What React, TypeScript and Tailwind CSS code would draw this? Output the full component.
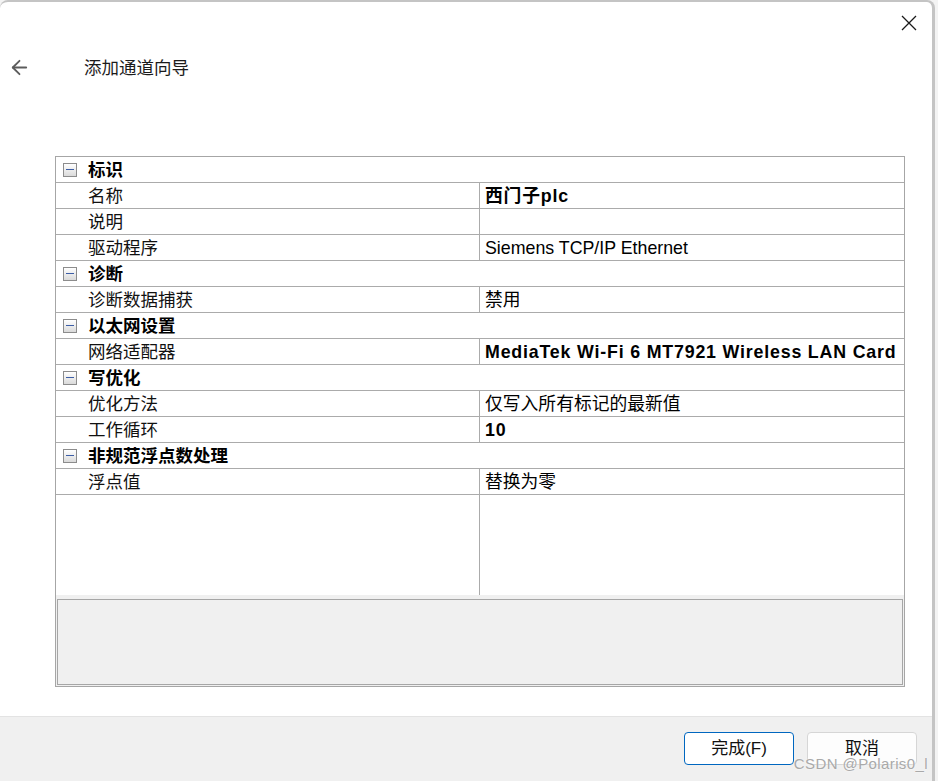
import React from "react";
import { ArrowLeft } from "lucide-react";

type Row =
  | { kind: "cat"; label: string }
  | { kind: "prop"; label: string; value: string; bold?: boolean };

const rows: Row[] = [
  { kind: "cat", label: "标识" },
  { kind: "prop", label: "名称", value: "西门子plc", bold: true },
  { kind: "prop", label: "说明", value: "" },
  { kind: "prop", label: "驱动程序", value: "Siemens TCP/IP Ethernet" },
  { kind: "cat", label: "诊断" },
  { kind: "prop", label: "诊断数据捕获", value: "禁用" },
  { kind: "cat", label: "以太网设置" },
  { kind: "prop", label: "网络适配器", value: "MediaTek Wi-Fi 6 MT7921 Wireless LAN Card", bold: true },
  { kind: "cat", label: "写优化" },
  { kind: "prop", label: "优化方法", value: "仅写入所有标记的最新值" },
  { kind: "prop", label: "工作循环", value: "10", bold: true },
  { kind: "cat", label: "非规范浮点数处理" },
  { kind: "prop", label: "浮点值", value: "替换为零" },
];

const font = { fontFamily: '"Liberation Sans", "Noto Sans CJK SC", sans-serif' };

const MinusBox = () => (
  <div className="w-[14px] h-[14px] border border-[#8c8c8c] bg-gradient-to-b from-white to-[#dadada] flex items-center justify-center">
    <div className="w-[8px] h-[1.5px] bg-[#3d5ea6]" />
  </div>
);

const GridRow = ({ row }: { row: Row }) => {
  if (row.kind === "cat") {
    return (
      <div className="h-[26px] border-b border-[#ababab] flex items-center">
        <div className="w-[32px] pl-[7px] flex items-center">
          <MinusBox />
        </div>
        <span className="pt-[2px] text-[17.5px] font-bold text-black leading-none">{row.label}</span>
      </div>
    );
  }
  return (
    <div className="h-[26px] border-b border-[#ababab] flex">
      <div className="w-[424px] pl-[32px] pt-[2px] flex items-center border-r border-[#ababab] text-[17.5px] text-[#111] leading-none">
        {row.label}
      </div>
      <div
        className={
          row.bold
            ? "flex-1 pl-[5px] pt-[2px] flex items-center text-[17.8px] font-bold tracking-[0.82px] text-black leading-none whitespace-nowrap overflow-hidden"
            : "flex-1 pl-[5px] pt-[2px] flex items-center text-[17.8px] text-black leading-none whitespace-nowrap overflow-hidden"
        }
      >
        {row.value}
      </div>
    </div>
  );
};

export default function App() {
  return (
    <div className="w-[938px] h-[781px] bg-[#f3f3f3] relative overflow-hidden" style={font}>
      <div className="w-[935px] h-[790px] bg-white rounded-t-[8px] border-t-2 border-r-[3px] border-[#c4c4c4] flex flex-col">
        {/* title area */}
        <div className="h-[154px] flex flex-col">
          <div className="flex justify-end pt-[13px] pr-[15px]">
            <svg width="16" height="16" viewBox="0 0 16 16" className="text-[#1a1a1a]">
              <path d="M1 1 L15 15 M15 1 L1 15" stroke="currentColor" strokeWidth="1.3" fill="none" />
            </svg>
          </div>
          <div className="mt-[23px] h-[26px] flex items-center">
            <div className="w-[84px] pl-[8px] flex items-center">
              <ArrowLeft size={23} strokeWidth={1.9} className="text-[#5c5c5c]" />
            </div>
            <span className="text-[17.5px] text-[#1b1b1b]" style={{ fontFamily: '"Noto Sans CJK SC", sans-serif' }}>
              添加通道向导
            </span>
          </div>
        </div>

        {/* property grid */}
        <div className="ml-[55px] w-[850px] h-[531px] border border-[#a6a6a6] bg-[#f0f0f0] flex flex-col">
          <div className="bg-white flex flex-col">
            {rows.map((r, i) => (
              <GridRow key={i} row={r} />
            ))}
            <div className="h-[100px] flex">
              <div className="w-[424px] border-r border-[#ababab]" />
            </div>
          </div>
          <div className="mt-[4px] mx-[1px] h-[86px] border border-[#a6a6a6] bg-[#f0f0f0]" />
        </div>

        {/* footer */}
        <div className="mt-[29px] flex-1 bg-[#f0f0f0] border-t border-[#e3e3e3] flex justify-end gap-[13px] pt-[15px] pr-[15px]">
          <button className="w-[110px] h-[33px] rounded-[4px] bg-white border border-[#0067c0] text-[17px] text-[#111] flex items-center justify-center">
            完成(F)
          </button>
          <button className="w-[110px] h-[33px] rounded-[4px] bg-[#fdfdfd] border border-[#d6d6d6] text-[17px] text-[#111] flex items-center justify-center">
            取消
          </button>
        </div>
      </div>

      {/* watermark */}
      <div className="absolute right-[10px] bottom-[6px] text-[15px] text-[#a9a9a9] tracking-[0.4px] [text-shadow:0_0_2px_#ffffff]">
        CSDN @Polaris0_l
      </div>
    </div>
  );
}
